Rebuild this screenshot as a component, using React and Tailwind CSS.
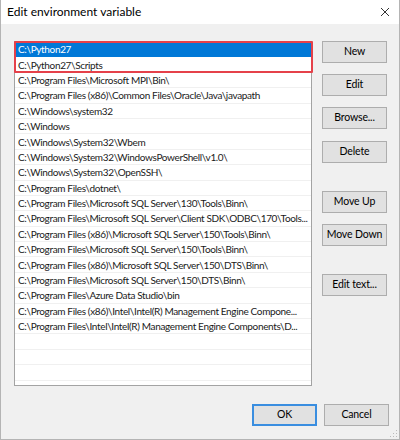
const rows = [
  'C:\\Python27',
  'C:\\Python27\\Scripts',
  'C:\\Program Files\\Microsoft MPI\\Bin\\',
  'C:\\Program Files (x86)\\Common Files\\Oracle\\Java\\javapath',
  'C:\\Windows\\system32',
  'C:\\Windows',
  'C:\\Windows\\System32\\Wbem',
  'C:\\Windows\\System32\\WindowsPowerShell\\v1.0\\',
  'C:\\Windows\\System32\\OpenSSH\\',
  'C:\\Program Files\\dotnet\\',
  'C:\\Program Files\\Microsoft SQL Server\\130\\Tools\\Binn\\',
  'C:\\Program Files\\Microsoft SQL Server\\Client SDK\\ODBC\\170\\Tools...',
  'C:\\Program Files (x86)\\Microsoft SQL Server\\150\\Tools\\Binn\\',
  'C:\\Program Files\\Microsoft SQL Server\\150\\Tools\\Binn\\',
  'C:\\Program Files (x86)\\Microsoft SQL Server\\150\\DTS\\Binn\\',
  'C:\\Program Files\\Microsoft SQL Server\\150\\DTS\\Binn\\',
  'C:\\Program Files\\Azure Data Studio\\bin',
  'C:\\Program Files (x86)\\Intel\\Intel(R) Management Engine Compone...',
  'C:\\Program Files\\Intel\\Intel(R) Management Engine Components\\D...',
  '',
  '',
  '',
]

function Button({ children, primary = false, className = '' }) {
  return (
    <button
      className={`w-[65px] h-[22px] flex items-center justify-center whitespace-nowrap bg-[#e1e1e1] text-[10.5px] tracking-[-0.15px] text-black ${
        primary ? 'border-2 border-[#3a8ee0]' : 'border border-[#adadad]'
      } ${className}`}
    >
      {children}
    </button>
  )
}

export default function App() {
  return (
    <div
      className="w-[400px] h-[440px] flex flex-col bg-[#f0f0f0] border-x border-b border-[#b4b4b4] overflow-hidden relative"
      style={{ fontFamily: 'Lato, "Noto Sans", sans-serif' }}
    >
      {/* Title bar */}
      <div className="h-[24px] bg-white flex items-center justify-between pl-[6px] pr-[9px] shrink-0">
        <span className="text-[12px] text-black">Edit environment variable</span>
        <svg width="10" height="10" viewBox="0 0 10 10" className="text-[#333]">
          <path d="M1 1L9 9M9 1L1 9" stroke="currentColor" strokeWidth="1" />
        </svg>
      </div>

      {/* Body */}
      <div className="flex pt-[17px] pl-[13px]">
        <div className="relative w-[298px] h-[345px] border border-[#a3a3a3] bg-white">
          {rows.map((r, i) => (
            <div
              key={i}
              className={`h-[15.4px] pl-[3px] flex items-center whitespace-nowrap overflow-hidden text-[10px] tracking-[-0.35px] leading-none border-b ${
                i === 0 ? 'bg-[#0078d7] text-white border-[#0078d7]' : 'text-[#1a1a1a] border-[#f0f0f0]'
              }`}
            >
              {r}
            </div>
          ))}
          {/* highlight box */}
          <div className="absolute -left-[1px] -top-[1px] w-[299px] h-[32px] border-2 border-[#e5414a] rounded-[1px]" />
        </div>

        <div className="flex flex-col ml-[10px]">
          <Button>New</Button>
          <Button className="mt-[11px]">Edit</Button>
          <Button className="mt-[11px]">Browse...</Button>
          <Button className="mt-[12px]">Delete</Button>
          <Button className="mt-[28px]">Move Up</Button>
          <Button className="mt-[11px]">Move Down</Button>
          <Button className="mt-[28px]">Edit text...</Button>
        </div>
      </div>

      {/* Footer */}
      <div className="flex justify-end gap-[7px] pr-[10px] mt-[18px]">
        <Button primary>OK</Button>
        <Button>Cancel</Button>
      </div>

      {/* resize grip */}
      <svg width="8" height="8" viewBox="0 0 8 8" className="absolute right-[1px] bottom-[1px]">
        <rect x="6" y="0" width="1" height="1" fill="#bbb" />
        <rect x="3" y="3" width="1" height="1" fill="#bbb" />
        <rect x="6" y="3" width="1" height="1" fill="#bbb" />
        <rect x="0" y="6" width="1" height="1" fill="#bbb" />
        <rect x="3" y="6" width="1" height="1" fill="#bbb" />
        <rect x="6" y="6" width="1" height="1" fill="#bbb" />
      </svg>
    </div>
  )
}
